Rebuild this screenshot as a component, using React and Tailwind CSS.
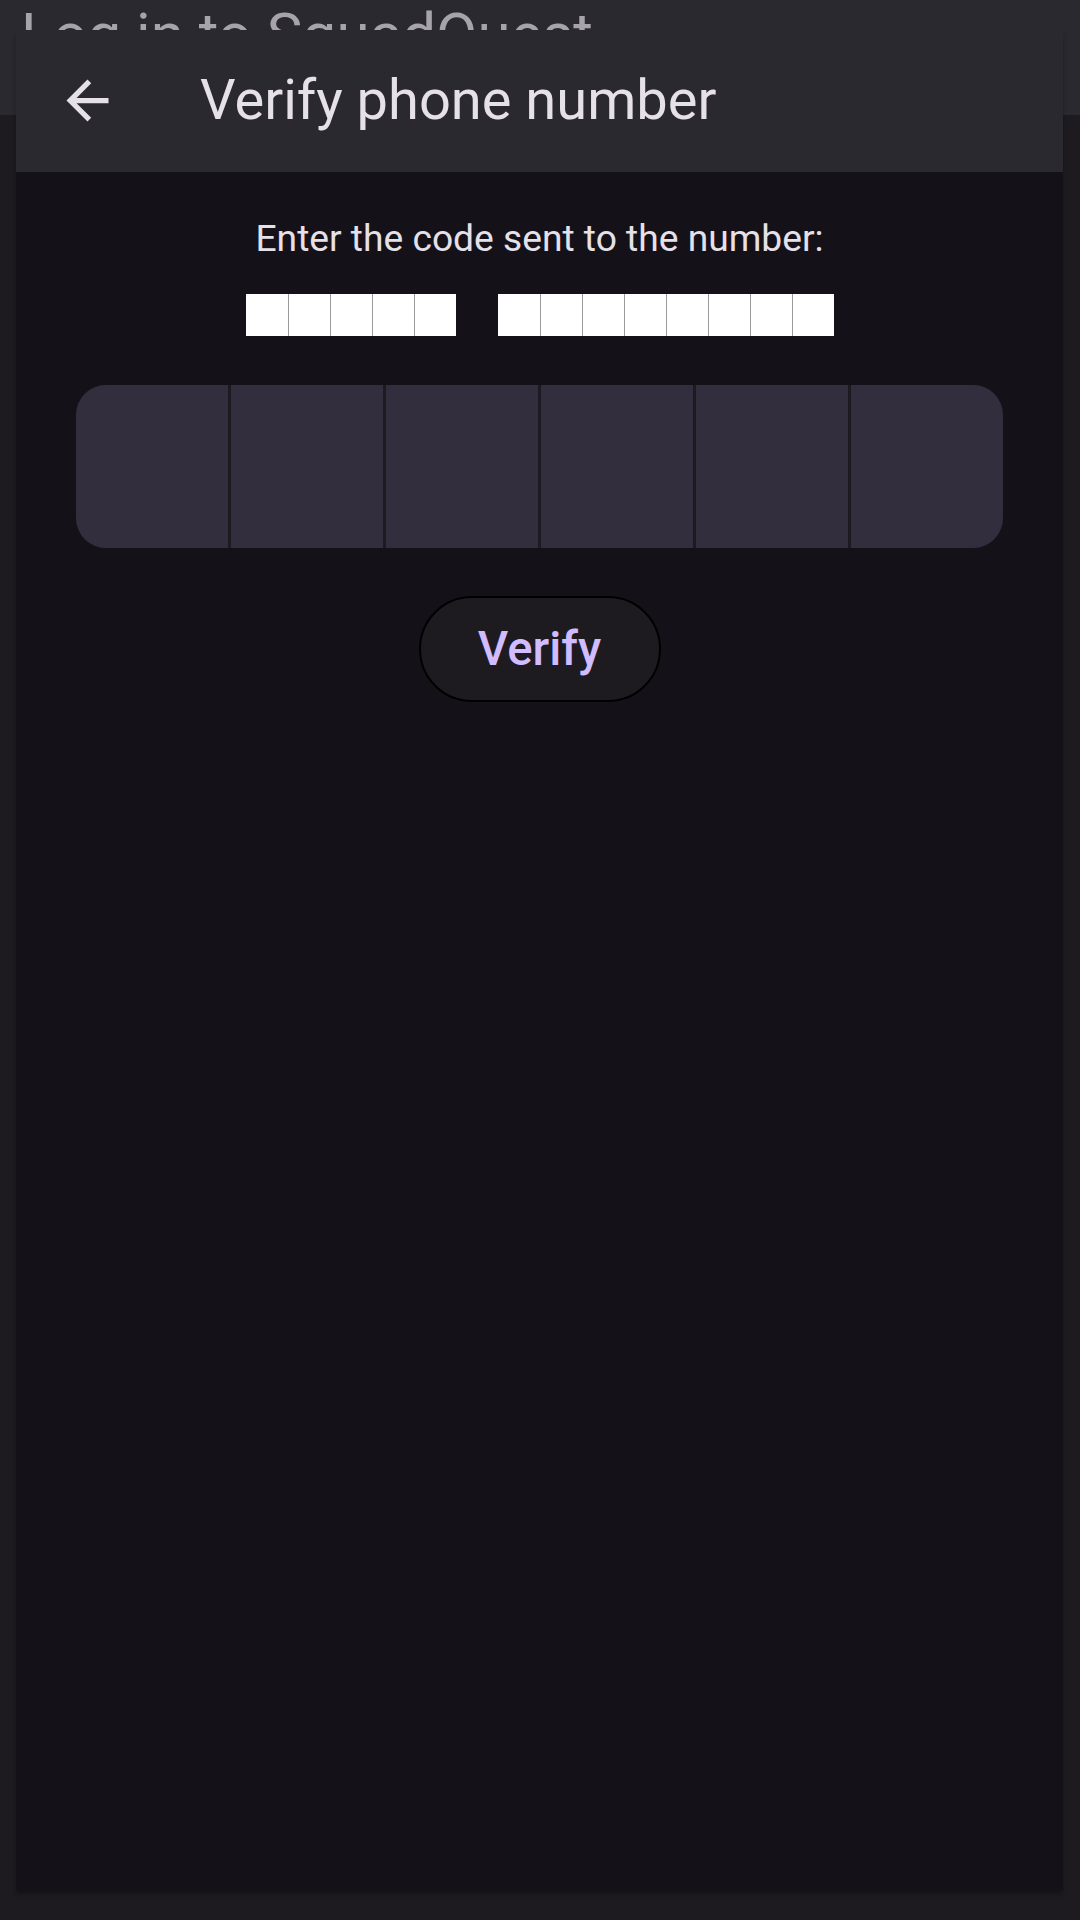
import React from "react";

const font = { fontFamily: "Roboto, 'Noto Sans', sans-serif" };

const ArrowBack = () => (
  <svg width="63" height="63" viewBox="0 0 24 24" fill="#e6e0e9">
    <path d="M20 11H7.83l5.59-5.59L12 4l-8 8 8 8 1.41-1.41L7.83 13H20v-2z" />
  </svg>
);

// hidden phone digits render as tofu boxes
const Blocks = ({ count }) => (
  <div className="flex">
    {Array.from({ length: count }).map((_, i) => (
      <div
        key={i}
        className={
          i === 0
            ? "h-[42px] w-[42px] bg-white"
            : "h-[42px] w-[42px] border-l border-[#9a9a9a] bg-white"
        }
      />
    ))}
  </div>
);

export default function App() {
  return (
    <div
      className="relative h-[1920px] w-full overflow-hidden bg-[#1d1b20]"
      style={font}
    >
      {/* page app bar behind the dialog */}
      <div className="h-[115px] bg-[#2b2930]">
        <div className="h-[30px] overflow-hidden pl-[21px] pt-[5px]">
          <div className="whitespace-nowrap text-[60px] leading-none text-[#a6a3ab]">
            Log in to SquadQuest
          </div>
        </div>
      </div>

      {/* full screen dialog */}
      <div className="absolute bottom-[30px] left-[16px] right-[17px] top-[30px] flex flex-col bg-[#141218] shadow-[0_4px_4px_rgba(0,0,0,0.3)]">
        <div className="flex h-[142px] shrink-0 items-center bg-[#2b2930] pb-[2px] pl-[40px]">
          <ArrowBack />
          <div className="ml-[81px] text-[56px] leading-none text-[#e6e0e9]">
            Verify phone number
          </div>
        </div>

        <div className="flex flex-col items-center pt-[48px]">
          <div className="text-[37.2px] leading-none text-[#e6e0e9]">
            Enter the code sent to the number:
          </div>

          <div className="mt-[37px] flex gap-[42px]">
            <Blocks count={5} />
            <Blocks count={8} />
          </div>

          <div className="mt-[49px] grid h-[163px] w-[927px] grid-cols-6 gap-[3px] overflow-hidden rounded-[30px] bg-[#1d1b22]">
            {Array.from({ length: 6 }).map((_, i) => (
              <div key={i} className="bg-[#322e3e]" />
            ))}
          </div>

          <button className="mt-[48px] flex h-[106px] w-[242px] items-center justify-center rounded-full border-2 border-black bg-[#1d1b20] text-[47.25px] font-medium leading-none text-[#d0bcff]">
            Verify
          </button>
        </div>
      </div>
    </div>
  );
}
